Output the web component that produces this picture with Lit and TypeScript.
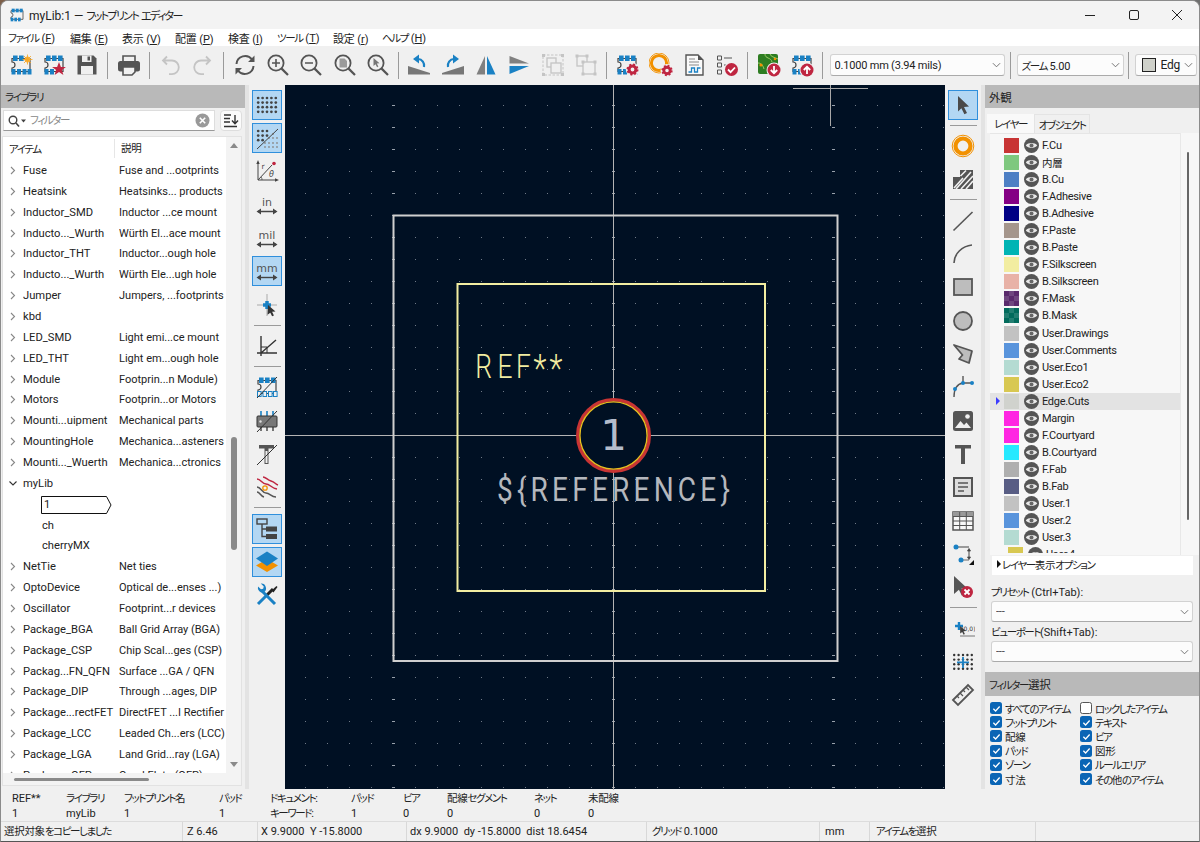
import { LitElement, html, css, svg } from 'lit';
import { customElement } from 'lit/decorators.js';

const B = '#1a81c4', R = '#bf2641', D = '#545454', O = '#f29100', G = '#c4c4c4';

const gear = (x: number, y: number, r: number, c = R) => svg`
  <circle cx=${x} cy=${y} r=${r + 1.2} fill="#f0f0f0"/>
  <circle cx=${x} cy=${y} r=${r * 0.62} fill="none" stroke=${c} stroke-width=${r * 0.55}/>
  <circle cx=${x} cy=${y} r=${r * 0.92} fill="none" stroke=${c} stroke-width=${r * 0.34} stroke-dasharray=${(Math.PI * 2 * r * 0.92) / 16}/>`;

const badge = (x: number, y: number, r: number, mark: string) => svg`
  <circle cx=${x} cy=${y} r=${r + 1} fill="#f0f0f0"/>
  <circle cx=${x} cy=${y} r=${r} fill=${R}/>
  <path d=${mark} fill="none" stroke="#fff" stroke-width="1.8"/>`;

const fp = (top = 3, bottom = 4) => svg`
  <path d="M3 5.5h18v13H3v-3.5a3 3 0 0 0 0-6z" fill="none" stroke="#444" stroke-width="1.2"/>
  ${[4, 10, 16].slice(0, top).map((x) => svg`<rect x=${x} y="2.5" width="4.6" height="5.5" fill=${B}/>`)}
  ${[2.5, 8, 13.5, 18.5].slice(0, bottom).map((x) => svg`<rect x=${x} y="16" width="4" height="5.5" fill=${B}/>`)}`;

const lens = (inner: unknown) => svg`
  <circle cx="10" cy="10" r="7.6" fill="none" stroke=${D} stroke-width="1.8"/>
  <path d="M15.6 15.6L22 22" stroke=${D} stroke-width="2.2"/>${inner}`;

const dots = (cols: number, rows: number, c: string, r = 1.35) => {
  const out = [];
  for (let i = 0; i < cols; i++) for (let j = 0; j < rows; j++) out.push(svg`<circle cx=${3.2 + i * 4.4} cy=${5 + j * 4.6} r=${r} fill=${c}/>`);
  return out;
};

const unit = (t: string) => svg`
  <text x="12" y="12.5" text-anchor="middle" font-family="DejaVu Sans" font-size="11" fill="#555">${t}</text>
  <path d="M3 18.5h18" stroke="#444" stroke-width="1.4"/><path d="M1.5 18.5l4.5-3v6zM22.5 18.5l-4.5-3v6z" fill="#444"/>`;

const ICONS: Record<string, unknown> = {
  fpNew: svg`${fp(2)}<circle cx="18.5" cy="6.5" r="3" fill="#f5b041"/><path d="M18.5 1.5v10M13.5 6.5h10M15 3l7 7M22 3l-7 7" stroke="#f5a623" stroke-width=".8"/>`,
  fpStar: svg`${fp(3, 2)}<path d="M17 9l1.9 5h5l-4 3.1 1.5 5L17 19l-4.4 3.1 1.5-5-4-3.1h5z" fill=${R}/>`,
  save: svg`<path d="M2.5 2.5h16l3 3v16h-19z" fill=${D}/><rect x="7" y="2.5" width="9.5" height="6.5" fill="#f0f0f0"/><rect x="12.5" y="3.5" width="2.5" height="4" fill=${D}/><rect x="6" y="13" width="12" height="8.5" fill="#f0f0f0"/>`,
  print: svg`<path d="M6 8V3h12v5" fill="#f0f0f0" stroke=${D} stroke-width="1.6"/><rect x="1" y="8" width="22" height="10.5" rx="2.5" fill=${D}/><path d="M6 14h12v5l-3 3H6z" fill="#f0f0f0" stroke=${D} stroke-width="1.6"/>`,
  undo: svg`<path d="M9 3.5L5 7.5l4 4M5 7.5h9a6.8 6.8 0 0 1 0 13.6h-3" fill="none" stroke=${G} stroke-width="1.8"/>`,
  redo: svg`<path d="M15 3.5l4 4-4 4M19 7.5h-9a6.8 6.8 0 0 0 0 13.6h3" fill="none" stroke=${G} stroke-width="1.8"/>`,
  refresh: svg`<path d="M3.5 11A8.6 8.6 0 0 1 19 6.5M20.5 13A8.6 8.6 0 0 1 5 17.5" fill="none" stroke=${D} stroke-width="2"/><path d="M21.5 2.5v6.5h-6.5zM2.5 21.5V15H9z" fill=${D}/>`,
  zoomIn: lens(svg`<path d="M10 6v8M6 10h8" stroke=${D} stroke-width="1.6"/>`),
  zoomOut: lens(svg`<path d="M6 10h8" stroke=${D} stroke-width="1.6"/>`),
  zoomFit: lens(svg`<path d="M6.5 5.5h5l2.5 2.5v6.5H6.5z" fill="#9a9a9a"/>`),
  zoomSel: lens(svg`<path d="M7.5 5l6 5.3-2.7.3 1.6 3-1.3.7-1.6-3-2 1.7z" fill="#777"/>`),
  rotL: svg`<path d="M1 21.5h22v-1.5L1 13z" fill="#777"/><path d="M17 14a6.5 6.5 0 0 0-6-8" fill="none" stroke=${B} stroke-width="2.2"/><path d="M12 1.5v9L6 6z" fill=${B}/>`,
  rotR: svg`<path d="M23 21.5H1v-1.5L23 13z" fill="#777"/><path d="M7 14a6.5 6.5 0 0 1 6-8" fill="none" stroke=${B} stroke-width="2.2"/><path d="M12 1.5v9L18 6z" fill=${B}/>`,
  mirV: svg`<path d="M11 3v18.5H2.5z" fill="#808080"/><path d="M13 3v18.5h8.5z" fill=${B}/>`,
  mirH: svg`<path d="M2.5 3L22 10.5H2.5z" fill="#808080"/><path d="M2.5 13H22L2.5 21z" fill=${B}/>`,
  group: svg`<rect x="2" y="2" width="20" height="20" fill="none" stroke=${G} stroke-width="1" stroke-dasharray="2.5 1.5"/><path d="M1 1h3v3H1zM20 1h3v3h-3zM1 20h3v3H1zM20 20h3v3h-3z" fill=${G}/><rect x="6" y="5" width="9" height="9" fill="#f0f0f0" stroke=${G} stroke-width="1.3"/><rect x="10" y="10" width="10" height="10" fill="#f0f0f0" stroke=${G} stroke-width="1.3"/>`,
  ungroup: svg`<rect x="3" y="3" width="10" height="10" fill="none" stroke=${G} stroke-width="1.3"/><rect x="9" y="9" width="12" height="12" fill="#f0f0f0" stroke=${G} stroke-width="1.3"/><path d="M1.5 1.5h3v3h-3zM11.5 1.5h3v3h-3zM7.5 7.5h3v3h-3zM19.5 7.5h3v3h-3zM7.5 19.5h3v3h-3zM19.5 19.5h3v3h-3z" fill=${G}/>`,
  fpProps: svg`${fp()}${gear(17.5, 16.5, 5.5)}`,
  padProps: svg`<circle cx="10" cy="10" r="7.6" fill="none" stroke=${O} stroke-width="3"/><circle cx="10" cy="10" r="10" fill="none" stroke=${O} stroke-width=".9"/>${gear(18, 17.5, 5.2)}`,
  sheet: svg`<path d="M4 2h12l5 5v15H4z" fill="#fafafa" stroke=${D} stroke-width="1.4"/><path d="M16 2v5h5z" fill=${D}/><path d="M7 6h6M7 9h10M7 12h10" stroke="#888"/><path d="M6.5 19h3v-4h3v4h3v-4h3" fill="none" stroke=${B} stroke-width="1.3"/>`,
  checks: svg`<path d="M2.5 3h4v4h-4zM2.5 10h4v4h-4zM2.5 17h4v4h-4z" fill="none" stroke=${D}/><path d="M9 5h8M9 12h4" stroke=${D} stroke-width="1.2"/>${badge(16.5, 16.5, 6.5, 'M13 16.5l2.6 2.6 4.4-4.6')}`,
  fromBoard: svg`<rect x="1" y="1" width="20" height="20" rx="2" fill="#2e7d22"/><path d="M8 1c0 5 6 3 7 8M13 1c1 3 4 3 8 5M1 10c4 0 5 3 6 6" fill="none" stroke="#9ccc65" stroke-width="1"/><circle cx="4" cy="12" r="1.6" fill=${O}/><circle cx="18" cy="6" r="1.3" fill=${O}/>${badge(17, 17, 6.5, 'M17 13v7M13.8 17l3.2 3.2 3.2-3.2')}`,
  toBoard: svg`${fp()}${badge(17, 17, 6.5, 'M17 21v-7M13.8 17l3.2-3.2 3.2 3.2')}`,
  grid: svg`${dots(5, 4, '#444')}`,
  gridOv: svg`${dots(3, 2, '#444')}<circle cx="3.2" cy="14.2" r="1.35" fill="#444"/><circle cx="7.6" cy="14.2" r="1.35" fill="#444"/>
    ${[[14, 12], [18, 8], [18, 12], [10, 17], [14, 17], [18, 17], [22, 17], [22, 12], [10, 21], [14, 21], [18, 21], [22, 21]].map(([x, y]) => svg`<circle cx=${x} cy=${y} r=".9" fill="#8c8c8c"/>`)}
    <path d="M2 23L23 3" stroke="#444" stroke-width="1"/>`,
  polar: svg`<path d="M3 3v18h19M3 21L17 6" fill="none" stroke="#444" stroke-width="1"/><path d="M3 1L1.3 5h3.4zM24 21l-4-1.7v3.4z" fill="#444"/><circle cx="19" cy="4.5" r="1.8" fill=${R}/><text x="6.5" y="10" font-family="DejaVu Sans" font-size="7.5" fill="#444">r</text><text x="14" y="18" font-family="DejaVu Sans" font-style="italic" font-size="8" fill="#444">θ</text><path d="M7 21a4 4 0 0 0-1-3" fill="none" stroke="#444" stroke-width=".8"/>`,
  inch: unit('in'),
  mil: unit('mil'),
  mm: unit('mm'),
  cross: svg`<path d="M12 1v22M2 12h20" stroke="#aaa" stroke-width="1"/><path d="M12 8v8M8 12h8" stroke=${B} stroke-width="3.5"/><path d="M13 12l7.5 6.5-3.4.3 1.8 3.6-1.8.9-1.8-3.6-2.8 2z" fill="#333"/>`,
  axes: svg`<path d="M6 2v20M2 19h20M6 19L21 6" fill="none" stroke="#333" stroke-width="1.4"/><path d="M6 13h6v6" fill="none" stroke="#333" stroke-width="1"/>`,
  padsOff: svg`${fp(3, 0)}${[2.5, 8, 13.5, 18.5].map((x) => svg`<rect x=${x} y="16.5" width="3.6" height="5" fill="#f0f0f0" stroke=${B} stroke-width="1"/>`)}<path d="M2 23L22 2" stroke="#333" stroke-width="1"/>`,
  chip: svg`<path d="M6 2v5M12 2v5M18 2v5" stroke=${B} stroke-width="1.6"/><path d="M6 17v5M12 17v5M18 17v5" stroke="#555" stroke-width="1.6"/><rect x="2" y="7" width="20" height="11" rx="1" fill="#777" stroke="#333"/><circle cx="5.5" cy="12.5" r="1.2" fill="#ddd"/><path d="M2 23L22 2" stroke="#333" stroke-width="1"/>`,
  textOff: svg`<path d="M4 3h15v3.5h-5.5V22h-4V6.5H4z" fill="#555"/><path d="M10.5 9h2v12h-2z" fill="#f0f0f0"/><path d="M2 23L22 3" stroke="#333" stroke-width="1"/>`,
  ratsnest: svg`<path d="M2 4c4 0 5 5 9 5s5 4 11 5" fill="none" stroke=${R} stroke-width="1.5"/><path d="M8 2c3 0 4 3 8 4s4 3 7 4" fill="none" stroke=${R} stroke-width="1.5"/><path d="M2 12c4 0 5 6 9 6s5 4 10 4" fill="none" stroke="#555" stroke-width="1.5"/><path d="M2 17c3 0 3 4 7 5" fill="none" stroke="#555" stroke-width="1.5"/><circle cx="10" cy="13" r="2.2" fill="#f0f0f0" stroke=${O} stroke-width="1.3"/>`,
  tree: svg`<rect x="2" y="2" width="10" height="5" fill="none" stroke="#444" stroke-width="1.4"/><rect x="11" y="9.5" width="11" height="5" fill="#444"/><rect x="11" y="17" width="11" height="5" fill="#444"/><path d="M7 7v12.5h4M7 12h4" fill="none" stroke="#444" stroke-width="1.4"/>`,
  layers: svg`<path d="M12 9l11 6.5L12 22 1 15.5z" fill=${O}/><path d="M12 1.5l11 7L12 16 1 8.5z" fill=${B}/>`,
  tools: svg`<path d="M3 21l9-9" stroke=${B} stroke-width="3"/><path d="M12 12l6-6" stroke="#222" stroke-width="3"/><path d="M16.5 7.5l2 2 4-5.5-1-1z" fill="#222"/><path d="M20 21L7 8" stroke=${B} stroke-width="3"/><path d="M8.5 8A4.8 4.8 0 0 1 3 2l3 2.8 2.2-.6.6-2.2-3-3A4.8 4.8 0 0 1 8.5 8z" fill=${B} transform="translate(0 1.5)"/>`,
  arrow: svg`<path d="M7 3l11 10.5-5 .5 3 6-2.6 1.3-3-6L7 18.5z" fill="#4a4a4a"/>`,
  via: svg`<circle cx="12" cy="12" r="10.8" fill="none" stroke=${O} stroke-width="1"/><circle cx="12" cy="12" r="7.5" fill="none" stroke=${O} stroke-width="4.2"/>`,
  zone: svg`<path d="M9 3h13v19H2v-12h7z" fill="#555"/><path d="M3 21l9-10M5 22l15-17M10 22l12-13M15 22l7-8M9.5 9L15 3.5" stroke="#f0f0f0" stroke-width="1.6"/>`,
  line: svg`<path d="M2.5 21.5L21.5 3" stroke="#555" stroke-width="1.6"/>`,
  arc: svg`<path d="M3 21C3 12 11 4 21 3" fill="none" stroke="#555" stroke-width="1.6"/>`,
  rect: svg`<rect x="3" y="4" width="18" height="16" fill="#bdbdbd" stroke="#555" stroke-width="1.8"/>`,
  circle: svg`<circle cx="12" cy="12" r="9" fill="#bdbdbd" stroke="#555" stroke-width="1.8"/>`,
  poly: svg`<path d="M3 3l18 6-3 12-10-4 3.5-4z" fill="#bdbdbd" stroke="#555" stroke-width="1.8" stroke-linejoin="round"/>`,
  anchor: svg`<path d="M12 1v7M3 22c0-8 3-13 9-14h10" fill="none" stroke="#555" stroke-width="1.4"/><circle cx="4" cy="14" r="2" fill=${B}/><circle cx="12" cy="8" r="2" fill=${B}/><circle cx="21" cy="8" r="2" fill=${B}/>`,
  image: svg`<rect x="2" y="2" width="20" height="20" rx="2.5" fill="#555"/><path d="M4 19l5.5-7 3.5 4 2.5-2.5L20 19z" fill="#f0f0f0"/><circle cx="16.5" cy="7.5" r="2.3" fill="#f0f0f0"/>`,
  text: svg`<path d="M4 3h16v3.5h-6V22h-4V6.5H4z" fill="#555"/>`,
  textbox: svg`<rect x="3" y="3" width="18" height="18" fill="#ddd" stroke="#555" stroke-width="2"/><path d="M7 8h10M7 12h10M7 16h6" stroke="#555" stroke-width="1.5"/>`,
  table: svg`<rect x="2" y="3" width="20" height="18" fill="#f8f8f8" stroke="#555" stroke-width="1.5"/><rect x="2" y="3" width="20" height="4.5" fill="#999"/><path d="M8.7 3v18M15.3 3v18M2 7.5h20M2 12h20M2 16.5h20" stroke="#555"/>`,
  dim: svg`<path d="M6 5h12M18 8v8" stroke="#444" stroke-width="1"/><path d="M16.5 9L18 6.5 19.5 9zM16.5 15l1.5 2.5 1.5-2.5zM10 18h8" fill="#444" stroke="#444" stroke-width=".8"/><circle cx="5" cy="5" r="2.5" fill=${B}/><circle cx="10" cy="18" r="2.5" fill=${B}/><path d="M23 18v5h-5z" fill="#111"/>`,
  del: svg`<path d="M3 1l13 12-5.5.5 3 6-2.6 1.3-3-6L3 19z" fill="#555"/><circle cx="16" cy="17" r="6" fill=${R}/><path d="M13.5 14.5l5 5M18.5 14.5l-5 5" stroke="#fff" stroke-width="1.8"/>`,
  origin: svg`<path d="M8 5v8M4 9h8" stroke=${B} stroke-width="2.4"/><path d="M9 9l6 5-2.5.2 1.4 2.8-1.3.7-1.4-2.8-2 1.5z" fill="#444"/><text x="24.500" y="14" text-anchor="end" font-family="DejaVu Sans" font-size="6" fill="#333">(0,0)</text><path d="M9 19h15" stroke="#555" stroke-width=".8"/>`,
  gridO: svg`${dots(5, 4, '#333', 1.2)}<path d="M12 7v11M6 12.3h12" stroke=${B} stroke-width="1.8"/>`,
  ruler: svg`<path d="M2 17L17 2l5 5L7 22z" fill="#f0f0f0" stroke="#555" stroke-width="1.8"/><path d="M6 13l2 2M9 10l3 3M12 7l2 2M15 4l3 3" stroke="#555" stroke-width="1.2"/>`,
};

const MENUS: [string, string, number][] = [
  ['ファイル', 'F', 62], ['編集', 'E', 52], ['表示', 'V', 53], ['配置', 'P', 53],
  ['検査', 'I', 49], ['ツール', 'T', 56], ['設定', 'r', 49], ['ヘルプ', 'H', 60],
];

const TOP = ['fpNew', 'fpStar', 'save', '|', 'print', '|', 'undo', 'redo', '|', 'refresh', 'zoomIn', 'zoomOut', 'zoomFit', 'zoomSel', '|',
  'rotL', 'rotR', 'mirV', 'mirH', 'group', 'ungroup', '|', 'fpProps', 'padProps', 'sheet', 'checks', '|', 'fromBoard', 'toBoard', '|'];
const LEFT = ['grid*', 'gridOv*', 'polar', 'inch', 'mil', 'mm*', 'cross', '|', 'axes', '|', 'padsOff', 'chip', 'textOff', 'ratsnest', '|', 'tree*', 'layers*', 'tools'];
const RIGHT = ['arrow*', '|', 'via', 'zone', '|', 'line', 'arc', 'rect', 'circle', 'poly', 'anchor', 'image', 'text', 'textbox', 'table', 'dim', 'del', '|', 'origin', 'gridO', 'ruler'];

const FOOTPRINTS: [string, string][] = [
  ['Fuse', 'Fuse and ...ootprints'], ['Heatsink', 'Heatsinks... products'], ['Inductor_SMD', 'Inductor ...ce mount'],
  ['Inducto..._Wurth', 'Würth El...ace mount'], ['Inductor_THT', 'Inductor...ough hole'], ['Inducto..._Wurth', 'Würth Ele...ugh hole'],
  ['Jumper', 'Jumpers, ...footprints'], ['kbd', ''], ['LED_SMD', 'Light emi...ce mount'], ['LED_THT', 'Light em...ough hole'],
  ['Module', 'Footprin...n Module)'], ['Motors', 'Footprin...or Motors'], ['Mounti...uipment', 'Mechanical parts'],
  ['MountingHole', 'Mechanica...asteners'], ['Mounti..._Wuerth', 'Mechanica...ctronics'], ['myLib', ''],
  ['1', ''], ['ch', ''], ['cherryMX', ''],
  ['NetTie', 'Net ties'], ['OptoDevice', 'Optical de...enses ...)'], ['Oscillator', 'Footprint...r devices'],
  ['Package_BGA', 'Ball Grid Array (BGA)'], ['Package_CSP', 'Chip Scal...ges (CSP)'], ['Packag...FN_QFN', 'Surface ...GA / QFN'],
  ['Package_DIP', 'Through ...ages, DIP'], ['Package...rectFET', 'DirectFET ...I Rectifier'], ['Package_LCC', 'Leaded Ch...ers (LCC)'],
  ['Package_LGA', 'Land Grid...ray (LGA)'], ['Package_QFP', 'Quad Flat...(QFP)'],
];
const CHILDREN = ['1', 'ch', 'cherryMX'];

const LAYERS: [string, string][] = [
  ['F.Cu', '#c83434'], ['内層', '#7fc87f'], ['B.Cu', '#4d7fc4'], ['F.Adhesive', '#840084'], ['B.Adhesive', '#000084'],
  ['F.Paste', '#a5968c'], ['B.Paste', '#00b4b4'], ['F.Silkscreen', '#f2eda1'], ['B.Silkscreen', '#e8b2a7'], ['F.Mask', '#5a2a6c'],
  ['B.Mask', '#026b5c'], ['User.Drawings', '#c2c2c2'], ['User.Comments', '#5994dc'], ['User.Eco1', '#b4dbd2'], ['User.Eco2', '#d8c852'],
  ['Edge.Cuts', '#d0d2cd'], ['Margin', '#ff26e2'], ['F.Courtyard', '#ff26e2'], ['B.Courtyard', '#26e9ff'], ['F.Fab', '#afafaf'],
  ['B.Fab', '#585d84'], ['User.1', '#c2c2c2'], ['User.2', '#5994dc'], ['User.3', '#b4dbd2'],
];

const FILTERS: [string, boolean][] = [
  ['すべてのアイテム', true], ['ロックしたアイテム', false], ['フットプリント', true], ['テキスト', true], ['配線', true], ['ビア', true],
  ['パッド', true], ['図形', true], ['ゾーン', true], ['ルールエリア', true], ['寸法', true], ['その他のアイテム', true],
];

const MSG = [
  ['REF**', '1'], ['ライブラリ', 'myLib'], ['フットプリント名', '1'], ['パッド', '1'], ['ドキュメント:', 'キーワード:'],
  ['パッド', '1'], ['ビア', '0'], ['配線セグメント', '0'], ['ネット', '0'], ['未配線', '0'],
];

const STATUS = ['選択対象をコピーしました', 'Z 6.46', 'X 9.9000  Y -15.8000', 'dx 9.9000  dy -15.8000  dist 18.6454', 'グリッド 0.1000', 'mm', 'アイテムを選択', ''];

// the reference font has narrow kana, so kana and kanji runs get tightened on their own
const t = (s: string) =>
  s.split(/([\u3040-\u30ff]+|[\u4e00-\u9fff]+)/).map((p) => {
    if (/^[\u3040-\u30ff]/.test(p)) return html`<span class="kana">${p}</span>`;
    if (/^[\u4e00-\u9fff]/.test(p)) return html`<span class="kanji">${p}</span>`;
    return p;
  });

const chevron = html`<svg class="chev" viewBox="0 0 10 6"><path d="M1 1l4 4 4-4" fill="none" stroke="#666" stroke-width="1"/></svg>`;
const ico = (n: string) => html`<svg class="ico" viewBox="0 0 24 24">${ICONS[n]}</svg>`;

@customElement('app-root')
export class AppRoot extends LitElement {
  static styles = css`
    :host {
      display: block;
      width: 1200px;
      height: 842px;
      overflow: hidden;
      background: linear-gradient(90deg, #7d5f48, #6f6f6f);
      font-family: Roboto, "Noto Sans CJK JP", sans-serif;
      font-feature-settings: "palt";
      font-size: 11px;
      color: #222;
    }
    .kana { font-size: 10.5px; letter-spacing: -1.4px; }
    .kanji { font-size: 10.5px; letter-spacing: -.3px; }
    .win {
      height: 842px;
      box-sizing: border-box;
      display: flex;
      flex-direction: column;
      border-radius: 8px 8px 0 0;
      overflow: hidden;
      background: #f0f0f0;
      border: 1px solid #8b8b8b;
      border-bottom-color: #555;
    }
    .title { height: 28px; flex: none; background: #f3f3f3; display: flex; align-items: center; padding-left: 8px; font-size: 12px; }
    .title .app { width: 16px; height: 16px; margin-right: 4px; }
    .title .name { flex: 1; }
    .title .kana { font-size: 11px; letter-spacing: -1.7px; }
    .ctl { width: 43.5px; height: 28px; display: flex; align-items: center; justify-content: center; }
    .ctl svg { width: 12px; height: 12px; }
    .menu { height: 17px; flex: none; background: #fff; display: flex; align-items: center; padding-left: 7px; font-size: 11px; }
    .menu span { flex: none; }
    .menu .kanji { font-size: 11px; }
    .menu u { text-decoration: underline; }
    .top { height: 39px; flex: none; display: flex; align-items: center; padding-left: 3px; box-sizing: border-box; padding-bottom: 1px; }
    .tb { width: 33.33px; height: 33.33px; flex: none; display: flex; align-items: center; justify-content: center; }
    .ico { width: 24px; height: 24px; display: block; }
    .vsep { width: 8px; height: 27px; flex: none; display: flex; justify-content: center; }
    .vsep::after { content: ""; width: 1px; background: #9a9a9a; }
    .combo {
      box-sizing: border-box;
      flex: none;
      background: #fcfcfc;
      border: 1px solid #d2d2d2;
      border-bottom-color: #aaa;
      border-radius: 3px;
      display: flex;
      align-items: center;
      padding: 0 3px 0 4px;
      font-size: 11px;
      letter-spacing: -.2px;
      height: 22px;
    }
    .combo .v { flex: 1; white-space: nowrap; overflow: hidden; }
    .chev { width: 9px; height: 6px; flex: none; }
    .c1 { width: 175px; margin: 0 2px 0 3px; }
    .c2 { width: 107px; margin: 0 1px 0 2px; }
    .c3 { width: 62px; margin-left: 2px; font-size: 12px; }
    .swatch { width: 12px; height: 12px; background: #cfd1ca; border: 1px solid #222; margin: 0 5px 0 2px; flex: none; }
    .main { flex: 1; min-height: 0; display: flex; }
    .panel-h { height: 23px; flex: none; background: #b9b9b9; display: flex; align-items: center; padding-left: 4px; font-size: 11.5px; color: #222; }
    .panel-h .kanji { font-size: 11.5px; }

    .lib { width: 244px; flex: none; display: flex; flex-direction: column; }
    .search { display: flex; height: 21px; margin: 2px 3px 0 2px; gap: 5px; flex: none; }
    .input { flex: 1; background: #fff; border: 1px solid #ddd; border-bottom-color: #999; display: flex; align-items: center; padding: 0 4px; gap: 4px; color: #888; }
    .input .ph { flex: 1; padding-bottom: 2px; }
    .input svg { flex: none; }
    .sort { width: 20px; border: 1px solid #ddd; border-radius: 4px; background: #fbfbfb; display: flex; align-items: center; justify-content: center; }
    .list { flex: 1; min-height: 0; margin: 5px 3px 3px 1px; border: 1px solid #e2e2e2; background: #fff; display: flex; }
    .lcol { flex: 1; min-width: 0; display: flex; flex-direction: column; }
    .lhead { height: 23px; flex: none; display: grid; grid-template-columns: 111px 1fr; align-items: center; font-size: 11px; }
    .lhead > span { padding-left: 6px; }
    .lhead > span + span { border-left: 1px solid #e6e6e6; height: 19px; line-height: 19px; }
    .lrows { flex: 1; min-height: 0; overflow: hidden; }
    .row { height: 20.86px; display: grid; grid-template-columns: 20px 96px 1fr; align-items: center; font-size: 11.2px; white-space: nowrap; }
    .row .tw { display: flex; justify-content: center; }
    .row .nm { overflow: hidden; }
    .row .ds { overflow: hidden; font-size: 11px; }
    .row.child .nm { padding-left: 19px; overflow: visible; }
    .sel { position: relative; display: inline-block; width: 66px; padding-left: 2px; }
    .sel svg { position: absolute; left: -1px; top: -2px; width: 71px; height: 18px; }
    .hbar { height: 12px; flex: none; background: #f3f3f3; display: flex; align-items: center; padding-left: 11px; }
    .hbar i { width: 135px; height: 3px; background: #8a8a8a; border-radius: 2px; }
    .vbar { width: 15px; flex: none; background: #f3f3f3; display: flex; flex-direction: column; align-items: center; padding-top: 6px; box-sizing: border-box; }
    .tri { width: 0; height: 0; border-left: 4px solid transparent; border-right: 4px solid transparent; flex: none; }
    .tri.up { border-bottom: 5px solid #8a8a8a; }
    .tri.dn { border-top: 5px solid #8a8a8a; margin-top: 212px; }
    .vbar i { width: 6px; height: 113px; margin-top: 289px; background: #8a8a8a; border-radius: 3px; flex: none; }

    .strip { width: 40px; flex: none; display: flex; background: #f0f0f0; }
    .sash { width: 4px; flex: none; background: #e3e3e3; }
    .col { flex: 1; display: flex; flex-direction: column; align-items: center; padding-top: 3px; }
    .col .tb { width: 30px; box-sizing: border-box; }
    .on { position: relative; }
    .on::before { content: ""; position: absolute; width: 30px; height: 30px; box-sizing: border-box; background: #b3d7f3; border: 1px solid #2f8fdc; }
    .on svg { position: relative; }
    .hsep { height: 8px; width: 27px; flex: none; display: flex; align-items: center; }
    .hsep::after { content: ""; height: 1px; flex: 1; background: #9a9a9a; }

    .canvas { width: 660px; flex: none; background: #001023; }
    .canvas svg { display: block; }

    .app-r { flex: 1; min-width: 0; display: flex; flex-direction: column; }
    .tabs { display: flex; height: 19px; margin: 6px 0 0 2px; flex: none; font-size: 11px; white-space: nowrap; }
    .tabs > span { display: flex; align-items: center; justify-content: center; }
    .tabs .a { width: 47px; background: #f9f9f9; }
    .tabs .b { width: 56px; background: #f0f0f0; border: 1px solid #e4e4e4; border-bottom: 0; box-sizing: border-box; }
    .lbox { height: 422px; flex: none; margin-left: 5px; background: #f7f7f7; display: flex; }
    .layers { width: 190px; height: 420px; flex: none; overflow: hidden; border-top: 1px solid #e6e6e6; box-sizing: border-box; padding-top: 3px; }
    .lr { height: 17.05px; display: flex; align-items: center; padding-left: 14px; box-sizing: border-box; position: relative; font-size: 11px; letter-spacing: -.3px; }
    .lr.act { background: #e3e3e3; }
    .lr.act::before { content: ""; position: absolute; left: 6px; border-left: 4px solid #3b3bff; border-top: 4px solid transparent; border-bottom: 4px solid transparent; }
    .lr .sw { width: 15px; height: 15px; flex: none; }
    .lr .sw.mask { background-image: repeating-conic-gradient(rgba(255,255,255,.13) 0 25%, transparent 0 50%); background-size: 10px 10px; }
    .lr .eye { width: 15px; height: 15px; margin: 0 3px 0 5px; flex: none; }
    .lr.clip { padding-left: 18px; }
    .lscroll { flex: 1; display: flex; border-left: 1px solid #e8e8e8; padding-left: 6px; box-sizing: border-box; }
    .lscroll i { width: 2px; height: 368px; margin-top: 19px; background: #666; border-radius: 1px; }
    .opts { height: 19px; margin: 1px 6px 0 7px; flex: none; background: #fff; display: flex; align-items: center; padding: 0 0 3px 5px; box-sizing: border-box; font-size: 11px; }
    .opts b { width: 0; height: 0; border-left: 4px solid #111; border-top: 4px solid transparent; border-bottom: 4px solid transparent; margin-right: 1px; }
    .lab { height: 15px; margin: 10px 0 1px 6px; flex: none; font-size: 11px; display: flex; align-items: center; padding-bottom: 2px; box-sizing: border-box; white-space: pre; }
    .lab.next { margin-top: 3px; }
    .opt { margin: 0 6px 0 6px; flex: none; height: 21px; }
    .opt .v { color: #444; }
    .fh { margin-top: 10px; height: 24px; flex: none; }
    .checks { padding: 5px 0 0 5px; display: grid; grid-template-columns: 90px 1fr; grid-auto-rows: 14.2px; font-size: 11px; }
    .chk { display: flex; align-items: center; gap: 3px; white-space: nowrap; }
    .box { width: 12px; height: 12px; flex: none; border-radius: 2.5px; background: #0a65b5; box-sizing: border-box; display: flex; align-items: center; justify-content: center; }
    .box.off { background: #fff; border: 1px solid #555; }
    .box svg { width: 9px; height: 9px; }

    .msg { height: 32px; flex: none; display: grid; grid-template-columns: 54px 58px 95px 51px 81px 52px 44px 87px 54px 80px; padding: 2px 0 0 11px; box-sizing: border-box; font-size: 11px; align-content: start; }
    .msg div { display: flex; flex-direction: column; white-space: nowrap; }
    .msg div > span { height: 15px; line-height: 15px; }
    .status { height: 20px; flex: none; display: grid; grid-template-columns: 182px 75px 149px 240px 173px 50px 166px 1fr; border-top: 1px solid #dcdcdc; box-sizing: border-box; font-size: 11px; }
    .status > span { border-right: 1px solid #d8d8d8; padding-left: 3px; line-height: 19px; white-space: pre; overflow: hidden; }
    .status > span:nth-child(2) { padding-left: 4px; }
    .status > span:nth-child(5), .status > span:nth-child(6) { padding-left: 5px; }
    .status > span:nth-child(7) { padding-left: 6px; }
    .status > span:last-child { border-right: 0; }
  `;

  private strip(items: string[]) {
    return items.map((n) => {
      if (n === '|') return html`<div class="hsep"></div>`;
      const on = n.endsWith('*');
      return html`<div class="tb ${on ? 'on' : ''}">${ico(on ? n.slice(0, -1) : n)}</div>`;
    });
  }

  private canvas() {
    return html`
      <svg width="660" height="705" viewBox="285 85 660 705">
        <defs>
          <pattern id="minor" x="613" y="435" width="22" height="22" patternUnits="userSpaceOnUse"><rect width="1" height="1" fill="#6f7986"/></pattern>
          <pattern id="major" x="612" y="435" width="220" height="22" patternUnits="userSpaceOnUse"><rect width="3" height="1" fill="#98a0ab"/></pattern>
        </defs>
        <rect x="285" y="85" width="660" height="705" fill="url(#minor)"/>
        <rect x="285" y="85" width="660" height="705" fill="url(#major)"/>
        <path d="M613.5 85V790M285 435.5H945" stroke="#b4b4b4" stroke-width="1"/>
        <path d="M830.5 85V126M793 88.5H868" stroke="#a8a8a8" stroke-width="1"/>
        <rect x="393.5" y="215.5" width="444" height="445.5" fill="none" stroke="#cfcfcf" stroke-width="2"/>
        <rect x="457.5" y="284" width="307.5" height="307" fill="none" stroke="#f2eda1" stroke-width="2"/>
        <text transform="scale(.8 1)" y="378" font-family="Roboto" font-weight="300" font-size="33" fill="#f2eda1"><tspan x="594 622 645">REF</tspan><tspan x="667 687" font-size="38" dy="4">**</tspan></text>
        <text transform="scale(.85 1)" x="584.7" y="501" textLength="274" lengthAdjust="spacing" font-family="Roboto" font-weight="400" font-size="33" fill="#b4b7bd">\${REFERENCE}</text>
        <circle cx="613.5" cy="435.5" r="35.8" fill="#001023" stroke="#c83434" stroke-width="3.4"/>
        <circle cx="613.5" cy="435.5" r="33.6" fill="none" stroke="#e8c020" stroke-width="1.4"/>
        <text x="613.5" y="450" text-anchor="middle" font-family="DejaVu Sans" font-size="42" fill="#b4bccb">1</text>
      </svg>`;
  }

  render() {
    const eye = html`<svg class="eye" viewBox="0 0 15 15"><circle cx="7.5" cy="7.5" r="7.5" fill="#555"/><path d="M1.8 7.5C4 4.3 11 4.3 13.2 7.5 11 10.7 4 10.7 1.8 7.5z" fill="#e8e8e8"/><circle cx="7.5" cy="7.5" r="2" fill="#666"/></svg>`;
    const check = html`<svg viewBox="0 0 10 10"><path d="M1.5 5.3l2.5 2.5 4.5-5" fill="none" stroke="#fff" stroke-width="1.4"/></svg>`;
    return html`
      <div class="win">
        <div class="title">
          <svg class="app" viewBox="0 0 24 24">${fp(3, 3)}</svg>
          <span class="name">${t('myLib:1 — フットプリント エディター')}</span>
          <div class="ctl"><svg viewBox="0 0 12 12"><path d="M1 6.5h10" stroke="#222"/></svg></div>
          <div class="ctl"><svg viewBox="0 0 12 12"><rect x="1.5" y="1.5" width="9" height="9" rx="1.5" fill="none" stroke="#222"/></svg></div>
          <div class="ctl"><svg viewBox="0 0 12 12"><path d="M1 1l10 10M11 1L1 11" stroke="#222"/></svg></div>
        </div>
        <div class="menu">
          ${MENUS.map(([m, k, w]) => html`<span style="width:${w}px">${t(m)} (<u>${k}</u>)</span>`)}
        </div>
        <div class="top">
          ${TOP.map((n) => (n === '|' ? html`<div class="vsep"></div>` : html`<div class="tb">${ico(n)}</div>`))}
          <div class="combo c1"><span class="v">0.1000 mm (3.94 mils)</span>${chevron}</div>
          <div class="vsep"></div><div class="combo c2"><span class="v">${t('ズーム 5.00')}</span>${chevron}</div>
          <div class="vsep"></div><div class="combo c3"><span class="swatch"></span><span class="v">Edg</span>${chevron}</div>
        </div>
        <div class="main">
          <div class="lib">
            <div class="panel-h"><span>${t('ライブラリ')}</span></div>
            <div class="search">
              <div class="input">
                <svg width="18" height="12" viewBox="0 0 18 12"><circle cx="5" cy="5" r="3.8" fill="none" stroke="#444" stroke-width="1.4"/><path d="M8 8l3 3.5" stroke="#444" stroke-width="1.6"/><path d="M13 4.5h5l-2.5 3z" fill="#444"/></svg>
                <span class="ph">${t('フィルター')}</span>
                <svg width="15" height="15" viewBox="0 0 15 15"><circle cx="7.5" cy="7.5" r="7" fill="#999"/><path d="M4.8 4.8l5.4 5.4M10.2 4.8l-5.4 5.4" stroke="#fff" stroke-width="1.6"/></svg>
              </div>
              <div class="sort"><svg width="16" height="14" viewBox="0 0 16 14"><path d="M1 1h7M1 4.5h6M1 8h6M1 12.5h13" stroke="#333" stroke-width="1.3"/><path d="M12 1v8M9 6.5l3 3.3 3-3.3" fill="none" stroke="#333" stroke-width="1.4"/></svg></div>
            </div>
            <div class="list">
              <div class="lcol">
                <div class="lhead"><span>${t('アイテム')}</span><span>${t('説明')}</span></div>
                <div class="lrows">
                  ${FOOTPRINTS.map(([n, d], i) => {
                    const child = i >= 16 && i <= 18 && CHILDREN.includes(n);
                    const open = n === 'myLib';
                    return html`<div class="row ${child ? 'child' : ''}">
                      <span class="tw">${child ? '' : html`<svg width="8" height="9" viewBox="0 0 8 9"><path d=${open ? 'M.5 2.5L4 6l3.5-3.5' : 'M2 1l3.5 3.5L2 8'} fill="none" stroke=${open ? '#333' : '#888'} stroke-width="1.1"/></svg>`}</span>
                      <span class="nm">${n === '1' && child
                        ? html`<span class="sel">1<svg viewBox="0 0 71 18"><path d="M.5 .5H65.5L70 9 65.5 17.5H.5z" fill="none" stroke="#111"/></svg></span>`
                        : n}</span>
                      <span class="ds">${d}</span>
                    </div>`;
                  })}
                </div>
                <div class="hbar"><i></i></div>
              </div>
              <div class="vbar"><span class="tri up"></span><i></i><span class="tri dn"></span></div>
            </div>
          </div>
          <div class="strip"><div class="sash"></div><div class="col">${this.strip(LEFT)}</div></div>
          <div class="canvas">${this.canvas()}</div>
          <div class="strip"><div class="col">${this.strip(RIGHT)}</div><div class="sash"></div></div>
          <div class="app-r">
            <div class="panel-h"><span>${t('外観')}</span></div>
            <div class="tabs"><span class="a"><span>${t('レイヤー')}</span></span><span class="b"><span>${t('オブジェクト')}</span></span></div>
            <div class="lbox">
              <div class="layers">
                ${LAYERS.map(([n, c]) => html`<div class="lr ${n === 'Edge.Cuts' ? 'act' : ''}">
                  <span class="sw ${n.endsWith('.Mask') ? 'mask' : ''}" style="background-color:${c}"></span>${eye}<span>${t(n)}</span>
                </div>`)}
                <div class="lr clip"><span class="sw" style="background-color:#d8c852"></span>${eye}<span>User.4</span></div>
              </div>
              <div class="lscroll"><i></i></div>
            </div>
            <div class="opts"><b></b><span>${t('レイヤー表示オプション')}</span></div>
            <div class="lab"><span>${t('プリセット (Ctrl+Tab):')}</span></div>
            <div class="combo opt"><span class="v">---</span>${chevron}</div>
            <div class="lab next"><span>${t('ビューポート(Shift+Tab):')}</span></div>
            <div class="combo opt"><span class="v">---</span>${chevron}</div>
            <div class="panel-h fh"><span>${t('フィルター選択')}</span></div>
            <div class="checks">
              ${FILTERS.map(([f, on]) => html`<label class="chk"><span class="box ${on ? '' : 'off'}">${on ? check : ''}</span><span>${t(f)}</span></label>`)}
            </div>
          </div>
        </div>
        <div class="msg">
          ${MSG.map(([a, b]) => html`<div><span>${t(a)}</span><span>${t(b)}</span></div>`)}
        </div>
        <div class="status">${STATUS.map((s) => html`<span>${t(s)}</span>`)}</div>
      </div>
    `;
  }
}
